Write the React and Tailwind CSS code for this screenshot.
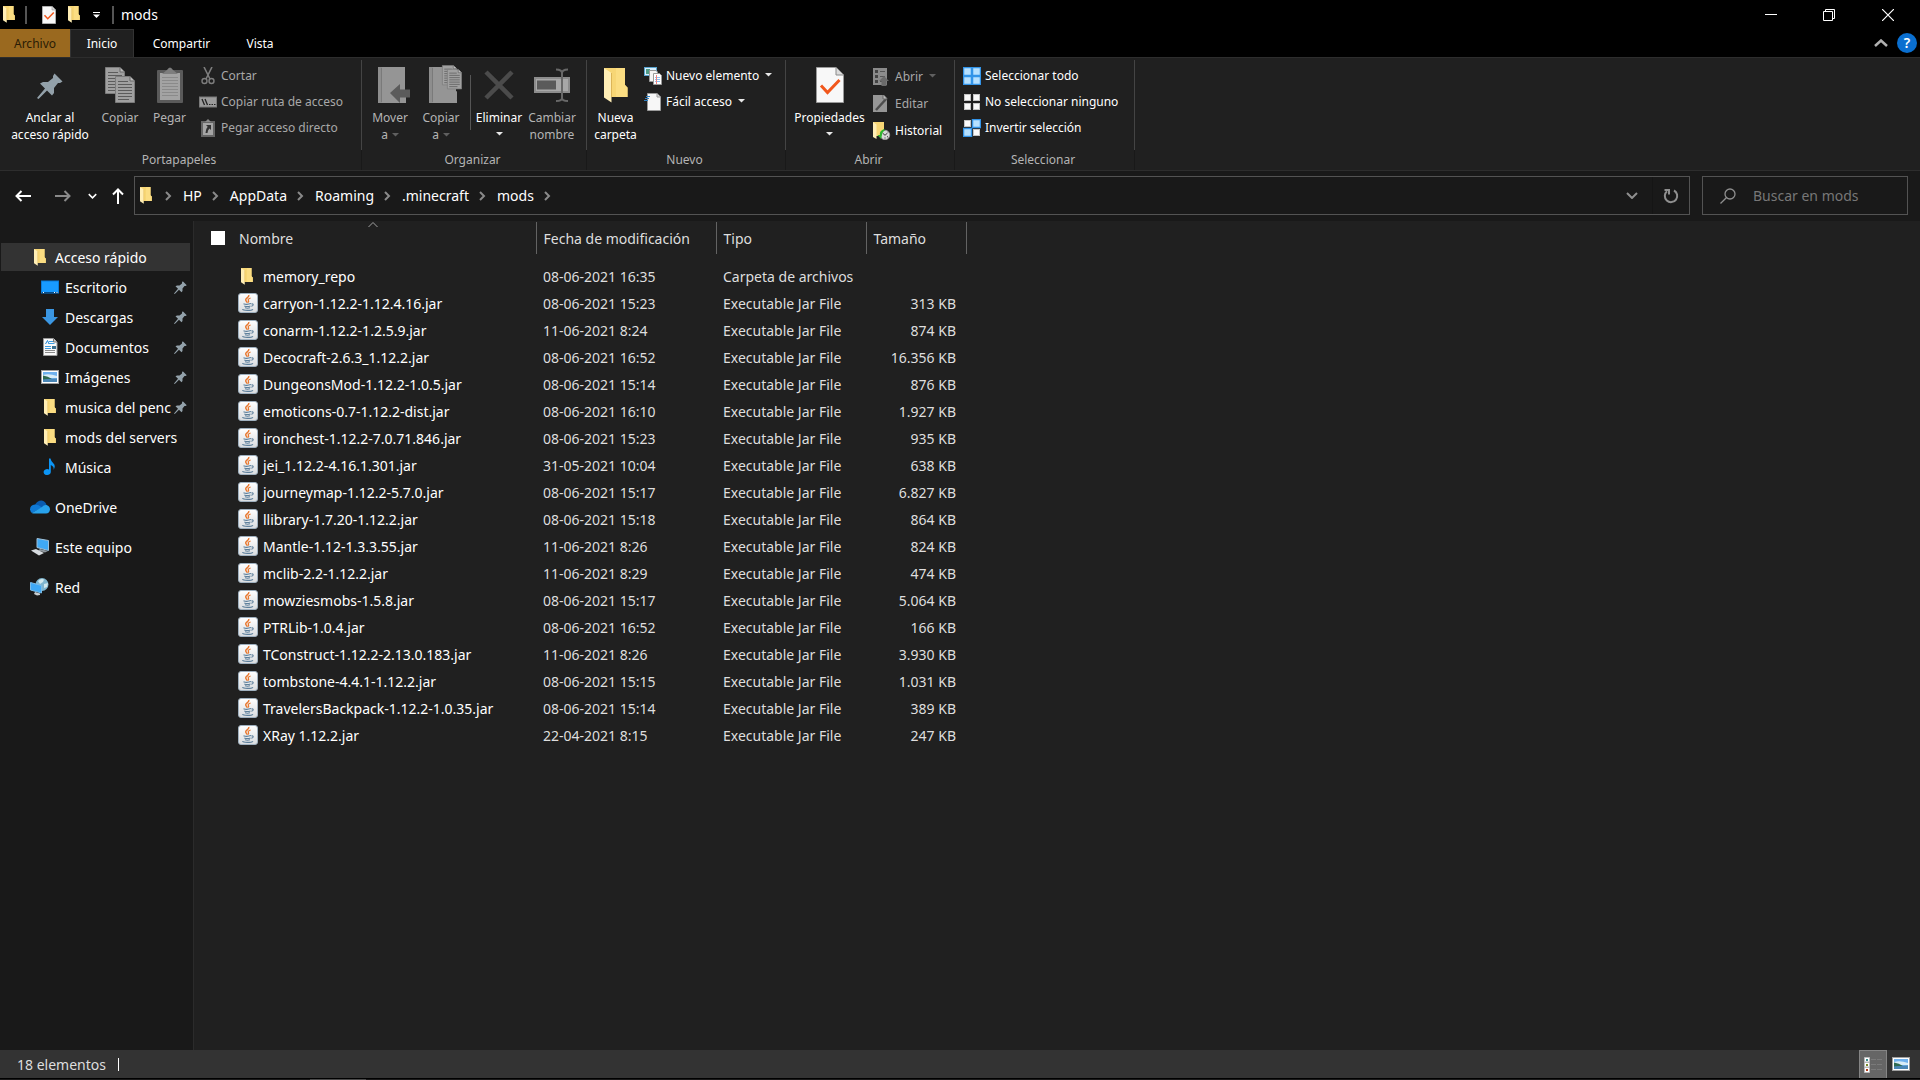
import { useState } from "react";

const files = [
  ["memory_repo", "08-06-2021 16:35", "Carpeta de archivos", ""],
  ["carryon-1.12.2-1.12.4.16.jar", "08-06-2021 15:23", "Executable Jar File", "313 KB"],
  ["conarm-1.12.2-1.2.5.9.jar", "11-06-2021 8:24", "Executable Jar File", "874 KB"],
  ["Decocraft-2.6.3_1.12.2.jar", "08-06-2021 16:52", "Executable Jar File", "16.356 KB"],
  ["DungeonsMod-1.12.2-1.0.5.jar", "08-06-2021 15:14", "Executable Jar File", "876 KB"],
  ["emoticons-0.7-1.12.2-dist.jar", "08-06-2021 16:10", "Executable Jar File", "1.927 KB"],
  ["ironchest-1.12.2-7.0.71.846.jar", "08-06-2021 15:23", "Executable Jar File", "935 KB"],
  ["jei_1.12.2-4.16.1.301.jar", "31-05-2021 10:04", "Executable Jar File", "638 KB"],
  ["journeymap-1.12.2-5.7.0.jar", "08-06-2021 15:17", "Executable Jar File", "6.827 KB"],
  ["llibrary-1.7.20-1.12.2.jar", "08-06-2021 15:18", "Executable Jar File", "864 KB"],
  ["Mantle-1.12-1.3.3.55.jar", "11-06-2021 8:26", "Executable Jar File", "824 KB"],
  ["mclib-2.2-1.12.2.jar", "11-06-2021 8:29", "Executable Jar File", "474 KB"],
  ["mowziesmobs-1.5.8.jar", "08-06-2021 15:17", "Executable Jar File", "5.064 KB"],
  ["PTRLib-1.0.4.jar", "08-06-2021 16:52", "Executable Jar File", "166 KB"],
  ["TConstruct-1.12.2-2.13.0.183.jar", "11-06-2021 8:26", "Executable Jar File", "3.930 KB"],
  ["tombstone-4.4.1-1.12.2.jar", "08-06-2021 15:15", "Executable Jar File", "1.031 KB"],
  ["TravelersBackpack-1.12.2-1.0.35.jar", "08-06-2021 15:14", "Executable Jar File", "389 KB"],
  ["XRay 1.12.2.jar", "22-04-2021 8:15", "Executable Jar File", "247 KB"],
];

const crumbs = ["HP", "AppData", "Roaming", ".minecraft", "mods"];

/* ---------- Icons ---------- */

const Folder = ({ className = "w-[12px] h-[17px]" }) => (
  <svg viewBox="0 0 24 35" preserveAspectRatio="none" className={`shrink-0 ${className}`}>
    <path d="M0 0H21V17L23.5 19.5V29H6Z" fill="#f7d675" />
    <path d="M12 0H21V17L23.5 19.5V29H12Z" fill="#fbdd82" />
    <path d="M0 0L7.500 5V34.500L0 29.500Z" fill="#ffeeb5" />
    <path d="M7.500 5V29" stroke="#dcb558" strokeWidth="1" />
  </svg>
);

const Pin = ({ className }) => (
  <svg viewBox="0 0 26 26" className={`shrink-0 ${className}`} fill="#93a1aa">
    <path d="M17.500 0.500L25.500 8.500L23 10L21 10L17 15V20L15 22.500L10 17.500L1.500 26L0 25L8 15.500L3 10.500L6 9H11L16 5V3Z" />
  </svg>
);

const CheckDoc = ({ className }) => (
  <svg viewBox="0 0 28 36" preserveAspectRatio="none" className={`shrink-0 ${className}`}>
    <path d="M0.500 0.500H20L27.500 8V35.500H0.500Z" fill="#f8f8f8" stroke="#9a9a9a" />
    <path d="M20 0.500V8H27.500" fill="#dcdcdc" stroke="#8a8a8a" />
    <path d="M5 18.500L11.500 25.500L23.500 13" fill="none" stroke="#f1571c" strokeWidth="3" />
  </svg>
);

const Jar = () => (
  <svg viewBox="0 0 20 20" className="w-5 h-5 mb-[2px] shrink-0">
    <defs>
      <linearGradient id="jar" x1="0" y1="0" x2="0" y2="1">
        <stop offset="0" stopColor="#ffffff" />
        <stop offset="1" stopColor="#d9dcdf" />
      </linearGradient>
    </defs>
    <rect x="0.500" y="0.500" width="19" height="19" rx="2.500" fill="url(#jar)" stroke="#9fb0bf" />
    <path d="M10.800 2C11.500 4.300 7.300 5.200 7.700 7C7.900 8.200 9.200 8.900 9.200 9.800" fill="none" stroke="#e8762c" strokeWidth="1.500" />
    <path d="M12.600 5C10.300 5.800 9.600 6.700 10.500 7.700C11 8.400 10.700 9 10 9.600" fill="none" stroke="#e8762c" strokeWidth="1.200" />
    <path d="M5.500 10.700C7 11.400 11 11.300 13 10.600M6.300 12.900C8 13.500 11 13.400 12.500 12.900M7 14.800C8.500 15.300 10.800 15.200 12 14.800M13.400 11C15.800 10.400 15.800 12.600 13.300 13.300M4.500 16.200C5 17.800 13.500 17.800 15 16.300" fill="none" stroke="#5d7f9b" strokeWidth="1.100" />
  </svg>
);

const Caret = ({ dim }) => (
  <svg viewBox="0 0 7 4" className="w-[7px] h-1 shrink-0">
    <path d="M0 0H7L3.500 3.500Z" fill={dim ? "#606060" : "#e8e8e8"} />
  </svg>
);

const Chevron = ({ className = "", d = "M1 1L6 6L11 1", box = "0 0 12 7" }) => (
  <svg viewBox={box} className={`shrink-0 ${className}`} fill="none" stroke="currentColor" strokeWidth="2">
    <path d={d} />
  </svg>
);

const CrumbArrow = () => (
  <Chevron className="w-[7px] h-[10px] ml-[10px] mr-[11px] text-[#8a8a8a]" box="0 0 7 10" d="M1 1L5 5L1 9" />
);

const Page = ({ x, y }) => (
  <g transform={`translate(${x} ${y})`}>
    <path d="M0.500 0.500H15L19.500 5V26.500H0.500Z" fill="#a0a0a0" stroke="#7c7c7c" />
    <path d="M15 0.500V5H19.500" fill="#bdbdbd" stroke="#6a6a6a" />
    <path d="M3 5.500H13M3 8.500H17M3 11.500H17M3 14.500H17M3 17.500H17M3 20.500H17M3 23.500H14" stroke="#5c5c5c" />
  </g>
);

const CopyIcon = () => (
  <svg viewBox="0 0 30 36" className="w-[30px] h-9">
    <Page x={0} y={0} />
    <Page x={10} y={9} />
  </svg>
);

const PasteIcon = () => (
  <svg viewBox="0 0 26 36" className="w-[26px] h-9">
    <rect x="0" y="3" width="26" height="33" rx="1" fill="#5a5a5a" />
    <path d="M3 6H23V33H3Z" fill="#a3a3a3" />
    <path d="M5 10.500H21M5 13.500H21M5 16.500H21M5 19.500H21M5 22.500H21M5 25.500H21M5 28.500H21" stroke="#8a8a8a" />
    <path d="M5 7L10 3Q13 -2 16 3L21 7Z" fill="#7d7d7d" />
  </svg>
);

const BookBase = () => (
  <>
    <path d="M0 0H27V24L28 25V36H0Z" fill="#8d8d8d" />
    <path d="M4 0H27V24L28 25V36H4Z" fill="#959595" />
    <path d="M3.500 1V35" stroke="#7a7a7a" />
  </>
);

const MoveIcon = () => (
  <svg viewBox="0 0 32 36" className="w-8 h-9">
    <BookBase />
    <path d="M12 26L22 17V22.500H32V30.500H22V36Z" fill="#5b5b5b" />
  </svg>
);

const CopyToIcon = () => (
  <svg viewBox="0 0 33 38" className="w-[33px] h-[38px]">
    <g transform="translate(0 2)">
      <BookBase />
    </g>
    <g transform="translate(13 0) scale(0.750)">
      <Page x={0} y={0} />
    </g>
    <g transform="translate(18 4) scale(0.750)">
      <Page x={0} y={0} />
    </g>
  </svg>
);

const DeleteIcon = () => (
  <svg viewBox="0 0 30 36" className="w-[30px] h-9" stroke="#4b4b4b" strokeWidth="4.500">
    <path d="M2 5L28 31M28 5L2 31" />
  </svg>
);

const RenameIcon = () => (
  <svg viewBox="0 0 36 36" className="w-9 h-9" fill="none">
    <path d="M1 11H35V25H1Z" fill="#a8a8a8" stroke="#8c8c8c" strokeWidth="2" />
    <path d="M3 13.500H22V22.500H3Z" fill="#5a5a5a" />
    <path d="M22 2.500Q28 2.500 28 6V31Q28 34 22 34M34 2.500Q28 2.500 28 6M28 31Q28 34 34 34" stroke="#686868" strokeWidth="2" />
  </svg>
);

const Cut = () => (
  <svg viewBox="0 0 18 18" className="w-[18px] h-[18px]" fill="none" stroke="#7d7d7d">
    <path d="M5 0L11 12M13 0L7 12" strokeWidth="1.600" />
    <circle cx="5.500" cy="14" r="2.500" strokeWidth="1.400" />
    <circle cx="12.500" cy="14" r="2.500" strokeWidth="1.400" />
  </svg>
);

const CopyPath = () => (
  <svg viewBox="0 0 18 18" className="w-[18px] h-[18px]" fill="none">
    <rect x="0.500" y="4" width="17" height="10" fill="#9c9c9c" stroke="#7a7a7a" />
    <path d="M3 6L5.500 12M6 6L8.500 12" stroke="#222" strokeWidth="1.300" />
    <path d="M10 11.500H11.500M12.500 11.500H14M15 11.500H16.500" stroke="#222" strokeWidth="1.200" />
  </svg>
);

const PasteLink = () => (
  <svg viewBox="0 0 18 18" className="w-[18px] h-[18px]" fill="none">
    <rect x="2" y="2" width="14" height="16" fill="#666" />
    <path d="M6 3L9 0L12 3Z" fill="#8a8a8a" />
    <rect x="4" y="4" width="10" height="12" fill="#a5a5a5" />
    <path d="M7 6H12V11L10.500 9.500Q8.500 11 8.500 14H6.500Q6.500 10 8.700 7.800Z" fill="#333" />
  </svg>
);

const NewItem = () => (
  <svg viewBox="0 0 18 18" className="w-[18px] h-[18px]">
    <rect x="0.500" y="0.500" width="12" height="8" fill="#d9efff" stroke="#5aa5d0" />
    <rect x="2" y="2" width="4" height="5" fill="#4f9c86" />
    <path d="M5.500 3.500H12L13.500 5V14.500H5.500Z" fill="#f4f4f4" stroke="#999" />
    <path d="M9.500 6.500H15.500L17.500 8.500V17.500H9.500Z" fill="#fff" stroke="#999" />
    <path d="M11 10.500H16M11 12.500H16M11 14.500H16" stroke="#8ec1f0" />
    <path d="M12.500 8V17" stroke="#f08080" />
  </svg>
);

const EasyAccess = () => (
  <svg viewBox="0 0 18 18" className="w-[18px] h-[18px]">
    <path d="M3.500 0.500H13L16.500 4V17.500H3.500Z" fill="#f7f7f7" stroke="#9a9a9a" />
    <path d="M13 0.500V4H16.500" fill="#ddd" stroke="#9a9a9a" />
    <path d="M2 3.500H6M1 5.500H5M0 7.500H4" stroke="#2f7fc0" />
  </svg>
);

const OpenIcon = () => (
  <svg viewBox="0 0 18 18" className="w-[18px] h-[18px]">
    <rect x="0" y="0" width="14" height="17" fill="#8b8b8b" />
    <path d="M2 2H5V5H2ZM2 7H5V10H2ZM2 12H5V15H2Z" fill="#444" />
    <path d="M7 3.500H12M7 8.500H12M7 13.500H9" stroke="#555" />
    <path d="M11 8L16 13H13.500V18H8.500V13H6Z" fill="#6a6a6a" />
  </svg>
);

const EditIcon = () => (
  <svg viewBox="0 0 18 18" className="w-[18px] h-[18px]">
    <path d="M0 0H11L14 3V17H0Z" fill="#969696" />
    <path d="M3 15L14 3" stroke="#4d4d4d" strokeWidth="2.500" />
    <path d="M10 0V4H14" fill="#bbb" stroke="#666" />
  </svg>
);

const HistoryIcon = () => (
  <svg viewBox="0 0 18 18" className="w-[18px] h-[18px]">
    <path d="M0 0H11V14H3Z" fill="#f7d675" />
    <path d="M0 0L3.500 2.500V17L0 15Z" fill="#ffeeb5" />
    <circle cx="12" cy="13" r="4.700" fill="#d8d8d8" stroke="#999" />
    <path d="M9.500 11L12 13.300L14.500 11M12 15.500V16.500M14 14.500L15 15" stroke="#333" fill="none" />
    <path d="M11 7Q6 9 7 13H4.500L8 17L9 13Q9 10 12 8.500Z" fill="#2fb52f" />
  </svg>
);

// Each tile of the 2x2 grid is either highlighted or plain
const Tiles = ({ on }) => (
  <svg viewBox="0 0 18 18" className="w-[18px] h-[18px]">
    {[[0, 0], [9, 0], [0, 9], [9, 9]].map(([x, y], i) =>
      on[i] ? (
        <rect key={i} x={x + 0.5} y={y + 0.5} width="8" height="8" fill="#b5e0ff" stroke="#3394e8" strokeWidth="1.500" />
      ) : (
        <rect key={i} x={x + 1.5} y={y + 1.5} width="6" height="6" fill="#fafafa" stroke="#c4c4c4" />
      )
    )}
  </svg>
);

const Desktop = () => (
  <svg viewBox="0 0 18 18" className="w-[18px] h-[18px]">
    <rect x="0.500" y="3" width="17" height="12" fill="#189bff" stroke="#0a7bd8" />
    <path d="M1 14.500H17" stroke="#064a86" />
    <path d="M2 14.500H3M13 14.500H14M15.500 14.500H16.500" stroke="#fff" />
  </svg>
);

const Download = () => (
  <svg viewBox="0 0 18 18" className="w-[18px] h-[18px]">
    <path d="M5 1H13V9H17L9 17L1 9H5Z" fill="#3b97e3" />
  </svg>
);

const Documents = () => (
  <svg viewBox="0 0 18 18" className="w-[18px] h-[18px]">
    <path d="M2.500 0.500H12.500L16 4V17.500H2.500Z" fill="#f8f8f8" stroke="#9a9a9a" />
    <path d="M12.500 0.500V4H16" fill="#ccc" stroke="#777" />
    <path d="M4.500 6L6.500 2.500L8 6" stroke="#1f86d6" fill="none" />
    <path d="M8 3.500H12M8 5.500H13.500M4 8.500H10M4 10.500H10" stroke="#3c9be0" />
    <path d="M4 12.500H14M4 14.500H14" stroke="#888" />
    <rect x="11" y="8" width="4" height="3" fill="#3a6f8f" />
  </svg>
);

const Pictures = ({ className = "w-[18px] h-[18px]" }) => (
  <svg viewBox="0 0 18 18" className={className}>
    <rect x="0.500" y="2.500" width="17" height="13" fill="#fff" stroke="#a0a0a0" />
    <rect x="2" y="4" width="14" height="10" fill="#6fb1ee" />
    <path d="M2 7Q8 5 16 8V10H2Z" fill="#d9edf8" />
    <path d="M2 7.500Q7 8 11 11L2 12Z" fill="#2f6b52" />
    <path d="M2 11.500L16 10.500V14H2Z" fill="#4a86b5" />
  </svg>
);

const Music = () => (
  <svg viewBox="0 0 18 18" className="w-[18px] h-[18px]">
    <path d="M8 0.500H9.500Q10 3.500 12.500 5.500Q15 8 12.500 12Q13.500 8.500 9.800 7V14A3.600 3 0 1 1 8 11.500Z" fill="#0c95f5" />
  </svg>
);

const OneDrive = () => (
  <svg viewBox="0 0 20 14" className="w-5 h-[14px]">
    <path d="M5 5Q7 0.500 11.500 0.500Q15.500 1 16.500 5L10 9Z" fill="#0a5cb0" />
    <path d="M5 4.500Q0 5 0 9.500Q0.500 12 2 13L12 7.500Q8.500 4.500 5 4.500Z" fill="#0f7ad6" />
    <path d="M12 7Q14 4.500 16.500 5Q20 6 20 9.500Q19.500 13.500 16 13.500H4Q2.500 13.500 2 13Z" fill="#28a2ec" />
  </svg>
);

const Computer = () => (
  <svg viewBox="0 0 20 18" className="w-5 h-[18px]">
    <path d="M7 0.500L18.500 2.500V12.500L7 9.500Z" fill="#3fa9f5" stroke="#9fc0d8" />
    <path d="M10 11L18 13L15 14.500L8 12.500Z" fill="#8f989e" />
    <path d="M1 12.500L6 11L14 15L9 17.500Z" fill="#d6dbdf" />
  </svg>
);

const Network = () => (
  <svg viewBox="0 0 20 18" className="w-5 h-[18px]">
    <circle cx="12" cy="6.500" r="6.500" fill="#7fb6cf" />
    <path d="M8 3Q11 0 14 1.500L13 4L10 6ZM14 6L18 5L17 9L14 10Z" fill="#d2e9ee" />
    <path d="M0.500 4.500L11.500 7.500V15L0.500 12Z" fill="#3fa9f5" stroke="#7bbce8" />
    <path d="M5 14L10 15.500V17L7 17.500L4 16Z" fill="#c8ced2" />
  </svg>
);

/* ---------- Ribbon pieces ---------- */

const BigButton = ({ icon, lines, dim, caret, className }) => (
  <button className={`flex flex-col items-center pt-[7px] leading-[17px] ${dim ? "text-[#b4b4b4]" : "text-white"} ${className}`}>
    <span className="h-9 mb-[6px] flex items-end justify-center">{icon}</span>
    {lines.map((line, i) => (
      <span key={line} className="flex items-center gap-1 whitespace-nowrap">
        {line}
        {caret && i > 0 && <Caret dim />}
      </span>
    ))}
    {caret && lines.length === 1 && (
      <span className="h-[15px] flex items-center">
        <Caret />
      </span>
    )}
  </button>
);

const SmallButton = ({ icon, label, dim, caret }) => (
  <button className={`flex items-center h-[26px] gap-1 whitespace-nowrap ${dim ? "text-[#a8a8a8]" : "text-white"}`}>
    {icon}
    <span>{label}</span>
    {caret && (
      <span className="pl-[2px] pb-[2px]">
        <Caret dim={dim} />
      </span>
    )}
  </button>
);

const Group = ({ label, className, children }) => (
  <section className={`flex flex-col shrink-0 pt-[2px] ${className}`}>
    <div className="flex h-[90px] border-r border-[#444]">{children}</div>
    <h2 className="text-center leading-5 pr-[3px] text-[#b4b4b4] border-r border-[#191919]">{label}</h2>
  </section>
);

const NavItem = ({ icon, label, sub, pinned, selected, spaced }) => (
  <li className={spaced ? "mt-[10px]" : ""}>
    <a
      href="#"
      className={`flex items-center h-[30px] border-y border-[#191919] ml-px mr-[2px] text-white ${sub ? "pl-10" : "pl-[29px]"} ${selected ? "bg-[#333]" : ""}`}
    >
      <span className={`shrink-0 flex justify-center ${sub ? "w-[18px] mr-[6px]" : "w-5 mr-[5px]"}`}>{icon}</span>
      <span className="whitespace-nowrap flex-1">{label}</span>
      {pinned && <Pin className="w-[13px] h-[13px] mr-[3px]" />}
    </a>
  </li>
);

const NavButton = ({ label, className, children }) => (
  <button aria-label={label} className={`flex items-center justify-center h-10 ${className}`}>
    {children}
  </button>
);

export default function App() {
  const [query, setQuery] = useState("");

  return (
    <div className="min-h-screen flex flex-col bg-[#191919] text-white text-[14px] font-['Noto_Sans','Open_Sans',sans-serif]">
      {/* Title bar */}
      <header className="bg-black">
        <div className="flex h-[29px] items-center pr-[2px]">
          <div className="flex items-center pl-[3px] flex-1">
            <Folder />
            <span className="w-[2px] h-[18px] border border-[#555] ml-[10px]" />
            <button aria-label="Propiedades" className="ml-[15px]">
              <CheckDoc className="w-[14px] h-[18px]" />
            </button>
            <button aria-label="Nueva carpeta" className="ml-3">
              <Folder />
            </button>
            <button aria-label="Personalizar" className="ml-[13px]">
              <svg viewBox="0 0 7 6" className="w-[7px] h-[6px]" fill="#fff">
                <path d="M0 0H7V1H0ZM0 2.500H7L3.500 6Z" />
              </svg>
            </button>
            <span className="w-[2px] h-[18px] border border-[#555] ml-3" />
            <h1 className="ml-[7px]">mods</h1>
          </div>
          <button aria-label="Minimizar" className="w-[58px] h-full flex items-center justify-center">
            <svg viewBox="0 0 12 12" className="w-3 h-3" stroke="#fff">
              <path d="M0 5.500H12" />
            </svg>
          </button>
          <button aria-label="Restaurar" className="w-[58px] h-full flex items-center justify-center">
            <svg viewBox="0 0 12 12" className="w-3 h-3" fill="none" stroke="#fff">
              <path d="M0.500 2.500H9.500V11.500H0.500ZM2.500 2.500V0.500H11.500V9.500H9.500" />
            </svg>
          </button>
          <button aria-label="Cerrar" className="w-[60px] h-full flex items-center justify-center">
            <svg viewBox="0 0 12 12" className="w-3 h-3" stroke="#fff" strokeWidth="1.200">
              <path d="M0 0L12 12M12 0L0 12" />
            </svg>
          </button>
        </div>

        {/* Ribbon tabs */}
        <div className="flex h-7 text-[12px]">
          <button className="w-[70px] pt-px bg-[#9a691f] text-[#2a1c05]">Archivo</button>
          <button className="w-16 bg-[#202020] border border-b-0 border-[#333]">Inicio</button>
          <button className="w-[95px] pt-px">Compartir</button>
          <button className="w-[62px] pt-px">Vista</button>
          <div className="flex-1 flex items-center justify-end pr-[3px] gap-[9px]">
            <button aria-label="Minimizar la cinta" className="text-[#b0b0b0]">
              <svg viewBox="0 0 14 8" className="w-[14px] h-2" fill="none" stroke="currentColor" strokeWidth="2.500">
                <path d="M1 7L7 1.500L13 7" />
              </svg>
            </button>
            <button aria-label="Ayuda" className="w-5 h-5 rounded-full bg-[#0a6fd0] text-[14px] leading-5 font-semibold">
              ?
            </button>
          </div>
        </div>
      </header>

      {/* Ribbon */}
      <div className="flex h-[114px] bg-[#202020] border-y border-[#2d2d2d] text-[12px]">
        <Group label="Portapapeles" className="w-[362px]">
          <BigButton className="w-[100px]" icon={<span className="pb-1"><Pin className="w-[26px] h-[26px]" /></span>} lines={["Anclar al", "acceso rápido"]} />
          <BigButton className="w-[40px]" dim icon={<CopyIcon />} lines={["Copiar"]} />
          <BigButton className="w-[59px]" dim icon={<PasteIcon />} lines={["Pegar"]} />
          <div className="pt-[3px]">
            <SmallButton dim icon={<Cut />} label="Cortar" />
            <SmallButton dim icon={<CopyPath />} label="Copiar ruta de acceso" />
            <SmallButton dim icon={<PasteLink />} label="Pegar acceso directo" />
          </div>
        </Group>
        <Group label="Organizar" className="w-[225px]">
          <BigButton className="w-[56px]" dim caret icon={<span className="pl-2"><MoveIcon /></span>} lines={["Mover", "a"]} />
          <BigButton className="w-[46px]" dim caret icon={<span className="pl-2"><CopyToIcon /></span>} lines={["Copiar", "a"]} />
          <span className="w-px h-[55px] mt-[15px] ml-[6px] bg-[#555]" />
          <BigButton className="w-[56px]" caret icon={<DeleteIcon />} lines={["Eliminar"]} />
          <BigButton className="w-[50px]" dim icon={<RenameIcon />} lines={["Cambiar", "nombre"]} />
        </Group>
        <Group label="Nuevo" className="w-[199px]">
          <BigButton className="w-[57px]" icon={<Folder className="w-6 h-[35px]" />} lines={["Nueva", "carpeta"]} />
          <div className="pt-[3px]">
            <SmallButton caret icon={<NewItem />} label="Nuevo elemento" />
            <SmallButton caret icon={<EasyAccess />} label="Fácil acceso" />
          </div>
        </Group>
        <Group label="Abrir" className="w-[169px]">
          <BigButton className="w-[87px]" caret icon={<CheckDoc className="w-7 h-9" />} lines={["Propiedades"]} />
          <div className="pt-1 flex flex-col items-start gap-px">
            <SmallButton dim caret icon={<OpenIcon />} label="Abrir" />
            <SmallButton dim icon={<EditIcon />} label="Editar" />
            <SmallButton icon={<HistoryIcon />} label="Historial" />
          </div>
        </Group>
        <Group label="Seleccionar" className="w-[180px]">
          <div className="pt-[3px] pl-2">
            <SmallButton icon={<Tiles on={[1, 1, 1, 1]} />} label="Seleccionar todo" />
            <SmallButton icon={<Tiles on={[0, 0, 0, 0]} />} label="No seleccionar ninguno" />
            <SmallButton icon={<Tiles on={[0, 1, 1, 0]} />} label="Invertir selección" />
          </div>
        </Group>
      </div>

      {/* Address bar */}
      <div className="flex py-[5px] pr-3">
        <div className="flex w-[134px] shrink-0 pl-[3px]">
          <NavButton label="Atrás" className="w-10">
            <svg viewBox="0 0 16 12" className="w-4 h-3" fill="none" stroke="#fff" strokeWidth="2">
              <path d="M1 6H16M6.500 1L1.500 6L6.500 11" />
            </svg>
          </NavButton>
          <NavButton label="Adelante" className="w-[39px]">
            <svg viewBox="0 0 16 12" className="w-4 h-3" fill="none" stroke="#8a8a8a" strokeWidth="2">
              <path d="M0 6H15M9.500 1L14.500 6L9.500 11" />
            </svg>
          </NavButton>
          <NavButton label="Ubicaciones recientes" className="w-5">
            <Chevron className="w-[9px] h-[6px]" />
          </NavButton>
          <NavButton label="Subir" className="w-[31px]">
            <svg viewBox="0 0 12 16" className="w-3 h-4" fill="none" stroke="#fff" strokeWidth="2">
              <path d="M6 16V1.500M1 6.500L6 1.500L11 6.500" />
            </svg>
          </NavButton>
        </div>
        <nav className="flex flex-1 items-center h-[39px] border border-[#535353] pl-[5px]">
          <Folder />
          <ol className="flex items-center pl-[3px]">
            {crumbs.map((c) => (
              <li key={c} className="flex items-center">
                <CrumbArrow />
                <a href="#">{c}</a>
              </li>
            ))}
          </ol>
          <CrumbArrow />
          <button aria-label="Ubicaciones anteriores" className="ml-auto w-10 flex justify-center text-[#8f8f8f]">
            <Chevron className="w-3 h-[7px]" />
          </button>
          <button aria-label="Actualizar" className="w-[37px] h-full flex items-center justify-center border-l border-[#151515]">
            <svg viewBox="0 0 16 16" className="w-4 h-4" fill="none" stroke="#8f8f8f" strokeWidth="2">
              <path d="M11 2.500A6.200 6.200 0 1 1 4 3.200M1.500 2H6V6.500" />
            </svg>
          </button>
        </nav>
        <label className="flex items-center w-[206px] h-[39px] ml-3 border border-[#535353] pl-[17px]">
          <svg viewBox="0 0 16 16" className="w-4 h-4 shrink-0" fill="none" stroke="#8f8f8f" strokeWidth="1.300">
            <circle cx="10" cy="6" r="5" />
            <path d="M6.300 9.700L0.500 15.500" />
          </svg>
          <input
            aria-label="Buscar en mods"
            placeholder="Buscar en mods"
            value={query}
            onChange={(e) => setQuery(e.target.value)}
            className="ml-[17px] w-full min-w-0 bg-transparent outline-none placeholder:text-[#777]"
          />
        </label>
      </div>

      <div className="flex flex-1">
        {/* Navigation pane */}
        <aside className="w-[194px] shrink-0 pt-[21px] pr-px border-r border-[#2b2b2b]">
          <ul>
            <NavItem selected icon={<Folder />} label="Acceso rápido" />
            <NavItem sub pinned icon={<Desktop />} label="Escritorio" />
            <NavItem sub pinned icon={<Download />} label="Descargas" />
            <NavItem sub pinned icon={<Documents />} label="Documentos" />
            <NavItem sub pinned icon={<Pictures />} label="Imágenes" />
            <NavItem sub pinned icon={<Folder />} label="musica del penc" />
            <NavItem sub icon={<Folder />} label="mods del servers" />
            <NavItem sub icon={<Music />} label="Música" />
            <NavItem spaced icon={<OneDrive />} label="OneDrive" />
            <NavItem spaced icon={<Computer />} label="Este equipo" />
            <NavItem spaced icon={<Network />} label="Red" />
          </ul>
        </aside>

        {/* File list */}
        <main className="flex-1 bg-[#202020] border-t border-[#202020]">
          <table className="table-fixed w-[772px] text-left whitespace-nowrap">
            <colgroup>
              <col className="w-[342px]" />
              <col className="w-[180px]" />
              <col className="w-[150px]" />
              <col className="w-[100px]" />
            </colgroup>
            <thead className="text-[#dedede]">
              <tr className="h-8">
                <th className="relative p-0 pl-[17px] font-normal border-r border-[#636363]">
                  <span className="flex items-center">
                    <input type="checkbox" aria-label="Seleccionar todo" className="appearance-none w-[14px] h-[14px] bg-white mr-[14px]" />
                    Nombre
                  </span>
                  <svg viewBox="0 0 10 5" className="absolute top-0 left-[174px] w-[10px] h-[5px]" fill="none" stroke="#a0a0a0">
                    <path d="M0.500 5L5 0.500L9.500 5" />
                  </svg>
                </th>
                <th className="p-0 pl-[7px] font-normal border-r border-[#636363]">Fecha de modificación</th>
                <th className="p-0 pl-[7px] font-normal border-r border-[#636363]">Tipo</th>
                <th className="p-0 pl-[7px] font-normal border-r border-[#636363]">Tamaño</th>
              </tr>
            </thead>
            <tbody className="text-[#dedede] before:block before:h-[9px]">
              {files.map(([name, date, type, size]) => (
                <tr key={name} className="h-[27px]">
                  <td className="p-0 pl-11 text-white">
                    <span className="flex items-center gap-[5px]">
                      {size ? (
                        <Jar />
                      ) : (
                        <span className="w-5 pr-[2px] flex justify-center">
                          <Folder />
                        </span>
                      )}
                      {name}
                    </span>
                  </td>
                  <td className="p-0 pl-[7px]">{date}</td>
                  <td className="p-0 pl-[7px]">{type}</td>
                  <td className="p-0 pr-[10px] text-right">{size}</td>
                </tr>
              ))}
            </tbody>
          </table>
        </main>
      </div>

      {/* Status bar */}
      <footer className="flex items-center h-7 bg-[#333] pl-[17px] pr-[10px] text-[#dedede]">
        <span className="pr-3">18 elementos</span>
        <span className="w-px h-[13px] bg-white" />
        <button aria-label="Detalles" className="ml-auto w-7 h-7 flex items-center justify-center bg-[#666] border border-b-0 border-[#858585]">
          <svg viewBox="0 0 18 16" className="w-[18px] h-4">
            <path d="M0.500 0.500H5.500V5H0.500ZM0.500 5.500H5.500V10H0.500ZM0.500 10.500H5.500V15.500H0.500Z" fill="#fff" stroke="#bbb" />
            <rect x="2" y="2" width="2" height="2" fill="#3a8a8a" />
            <rect x="2" y="7" width="2" height="2" fill="#7a8a2a" />
            <rect x="2" y="12" width="2" height="2" fill="#b03a1a" />
            <path d="M7 2.500H12M13 2.500H18M7 7.500H12M13 7.500H18M7 12.500H12M13 12.500H18" stroke="#7a7a7a" />
          </svg>
        </button>
        <button aria-label="Iconos grandes" className="ml-[5px]">
          <Pictures />
        </button>
      </footer>
      <div className="h-[2px] bg-[#1a1a1a] border-t border-black pl-[310px]">
        <div className="w-14 h-px bg-[#4a4a4a]" />
      </div>
    </div>
  );
}
